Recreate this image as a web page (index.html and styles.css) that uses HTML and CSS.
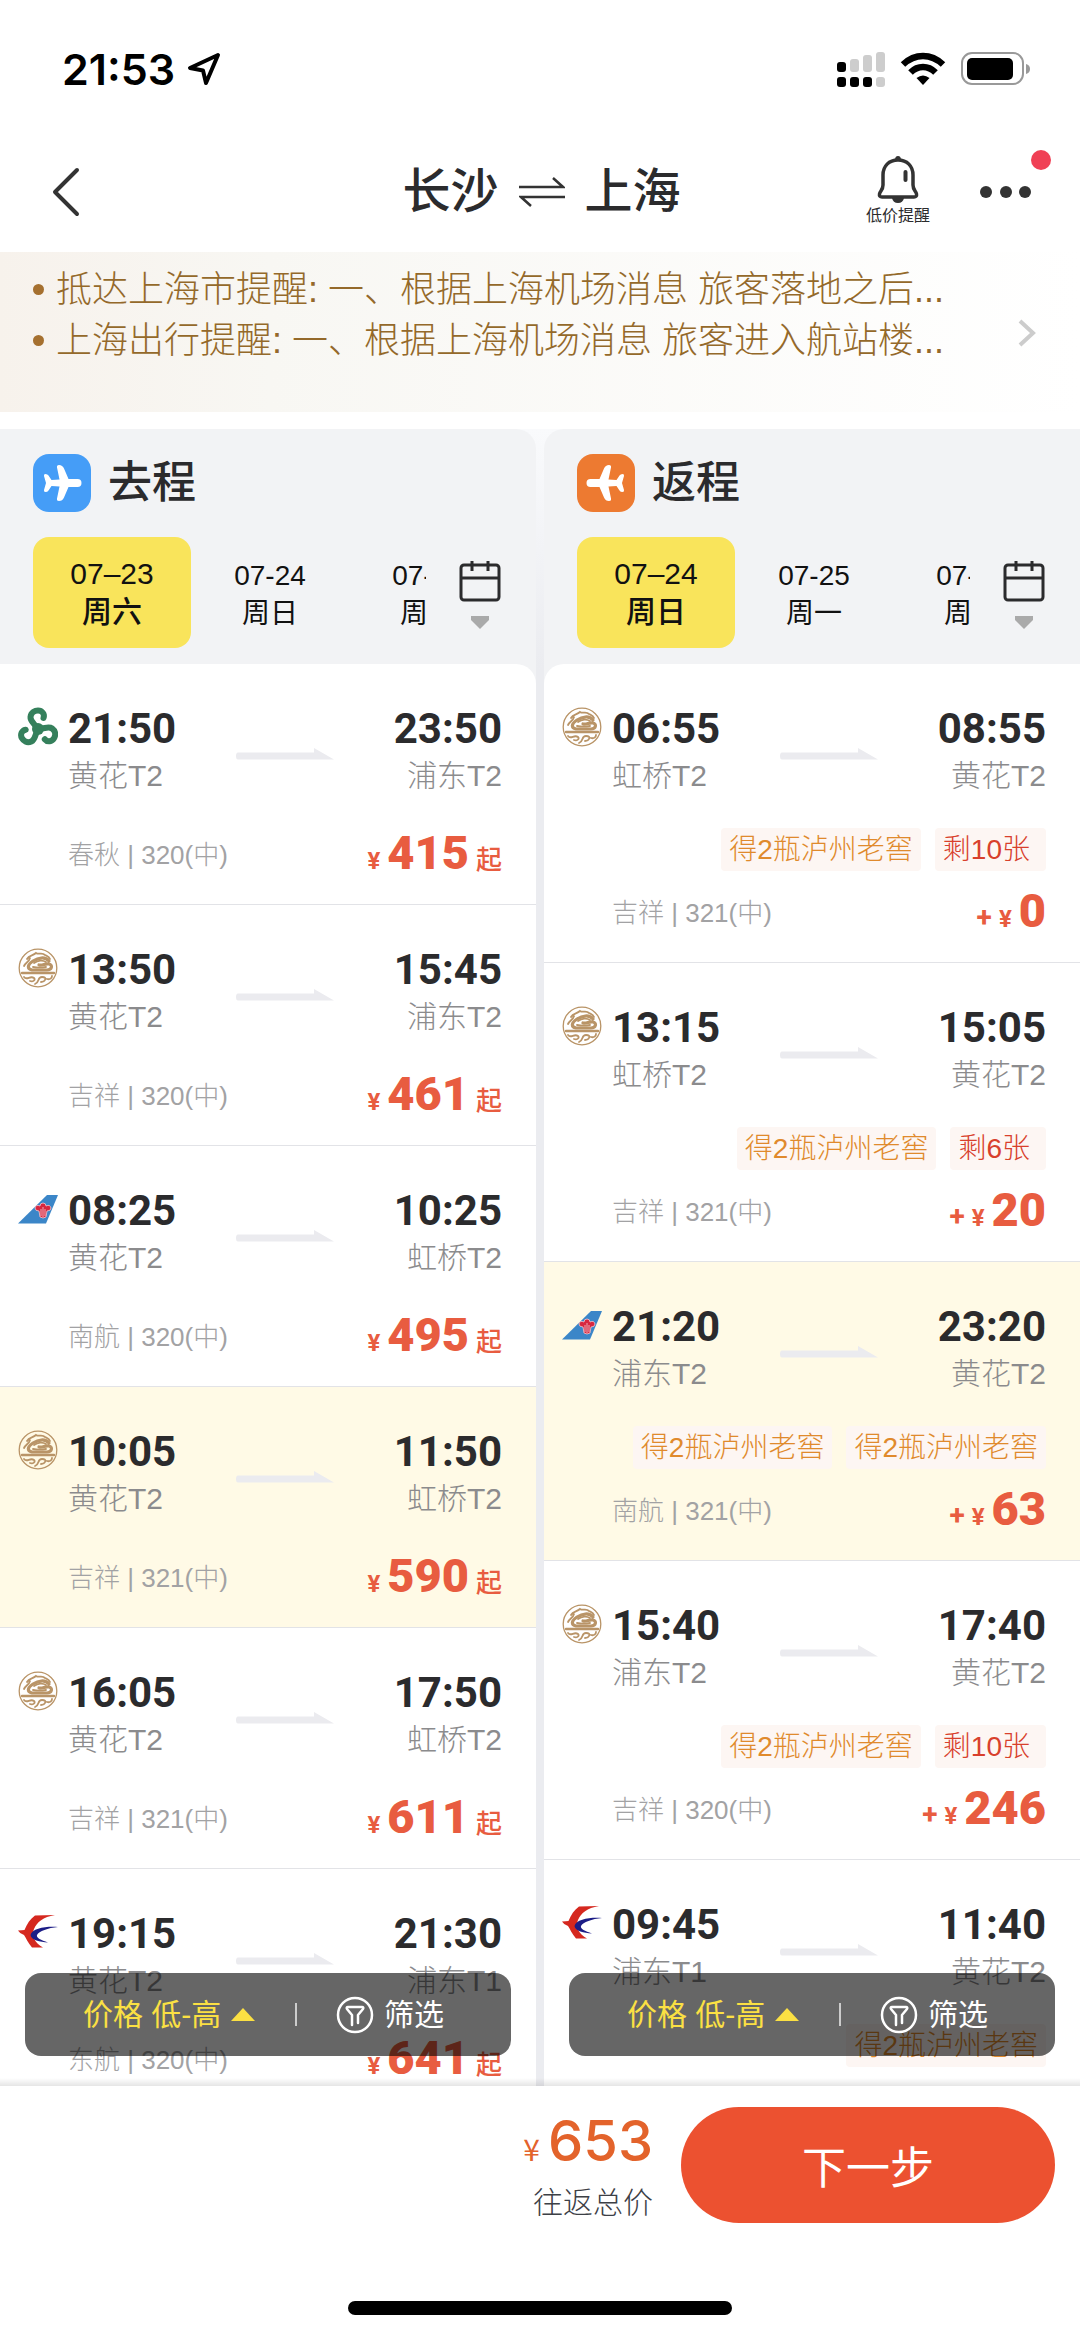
FILE: index.html
```html
<!DOCTYPE html>
<html lang="zh-CN">
<head>
    <meta charset="UTF-8">
    <meta name="viewport" content="width=device-width, initial-scale=1.0">
    <title>长沙 ⇌ 上海</title>
    <link rel="stylesheet" href="styles.css">
</head>
<body>
    <!-- shared icons -->
    <svg class="sprite" aria-hidden="true">
        <symbol id="plane" viewBox="0 0 58 58">
            <path fill="#fff" d="M44.500 25H35.500L31 14.500Q29.500 11 26 11Q23.500 11 24 13.500L26.500 25.500L18.500 26L15.500 21.500Q14.500 20 12.500 20Q10.500 20 11 22L13 29L11 36Q10.500 38 12.500 38Q14.500 38 15.500 36.500L18.500 32L26.500 32.500L24 44.500Q23.500 47 26 47Q29.500 47 31 43.500L35.500 33H44.500Q48.500 33 48.500 29Q48.500 25 44.500 25Z"/>
        </symbol>
        <symbol id="calendar" viewBox="0 0 42 72">
            <g fill="none" stroke="#2b2b2d" stroke-width="3">
                <rect x="2" y="5" width="38" height="35" rx="3"/>
                <path d="M2 18H40M13 1V11M29 1V11"/>
            </g>
            <path fill="#aaa" d="M12 56H30V60L21 69L12 60Z"/>
        </symbol>
        <symbol id="arrow" viewBox="0 0 98 12">
            <path fill="#ebebef" d="M2 4.500H78V0L98 11.500H2Q0 11.500 0 8Q0 4.500 2 4.500Z"/>
        </symbol>
        <symbol id="filter" viewBox="0 0 38 38">
            <g fill="none" stroke="#fff" stroke-width="2.500" stroke-linejoin="round" stroke-linecap="round">
                <circle cx="19" cy="19" r="17"/>
                <path d="M16 29V19L11 13Q10 11 12 11H26Q28 11 27 13L22 19V27"/>
            </g>
        </symbol>
        <symbol id="spring" viewBox="0 0 40 40">
            <g fill="none" stroke="#35805c" stroke-width="6" stroke-linecap="round">
                <path d="M20 23C18 17 12 15 12.500 10C13 5 17 3.500 20 3.500C24 3.500 27 7 25.500 11"/>
                <path d="M20 23C18 17 12 15 12.500 10C13 5 17 3.500 20 3.500C24 3.500 27 7 25.500 11" transform="rotate(120 20 22)"/>
                <path d="M20 23C18 17 12 15 12.500 10C13 5 17 3.500 20 3.500C24 3.500 27 7 25.500 11" transform="rotate(240 20 22)"/>
            </g>
            <circle cx="20" cy="22" r="6" fill="#35805c"/>
        </symbol>
        <symbol id="juneyao" viewBox="0 0 40 40">
            <g fill="none" stroke="#b99467" stroke-linecap="round">
                <circle cx="20" cy="20" r="18.800" stroke-width="1.300"/>
                <path stroke-width="3.200" d="M31 13C27 8 20 10 15 13C9 17 9 21 14 22H29C34 22 35 17 31 16C27 15 25 18 21 17"/>
                <path stroke-width="1.800" d="M9 11C11 7 15 8 18 5C21 7 24 4 27 7C29 8 31 8 32 11M6 18C8 14 11 14 12 10M16 15C20 12 25 12 28 14M15 19C20 20 23 20 28 19"/>
                <path stroke-width="2.400" d="M4 25H36"/>
                <path stroke-width="1.800" d="M6 29C9 33 12 27 16 30C18 32 15 34 12 33M17 36C22 34 19 29 24 29C30 29 27 34 23 34M29 31C32 32 34 30 34 28"/>
            </g>
        </symbol>
        <symbol id="southern" viewBox="0 0 40 40">
            <path fill="#3b86c8" d="M0 34.500L29 6H40L28 34.500Z"/>
            <g fill="#d8273f" stroke="#f3c9d2" stroke-width="0.800">
                <path d="M17 19Q18 15 22 17Q22 14 25 14Q28 14 28 17Q32 15 33 19Q33 22 29 22L28 28Q25 30 22 28L21 22Q17 22 17 19Z"/>
                <path d="M23 20V27M25 18V28M27 20V27" fill="none"/>
            </g>
        </symbol>
        <symbol id="eastern" viewBox="0 0 40 40">
            <path fill="#d5281f" d="M37 3C25 5 19 10 16 17C13 24 17 31 25 35.500H14C10 31 8 26 6 23Q2 22 0 18.500Q4 18 6.500 18C9 12 12 7 17 3.500Z"/>
            <path fill="#1c1d86" d="M40 15C29 14 14 16 12.500 23C13 28 22 30 30 30.500C23 28 18 26 19 23C21 19 30 16 40 15Z"/>
        </symbol>
    </svg>

    <div class="app">
        <div class="status-bar">
            <div class="clock">
                <span>21:53</span>
                <svg width="34" height="34" viewBox="0 0 34 34"><path d="M31 3L3 16L16 18.500L19 31Z" fill="none" stroke="#000" stroke-width="4" stroke-linejoin="round"/></svg>
            </div>
            <div class="status-icons">
                <svg width="48" height="36" viewBox="0 0 48 36">
                    <g fill="#000">
                        <rect x="0" y="11" width="9" height="10" rx="3"/>
                        <rect x="0" y="26" width="9" height="10" rx="3"/>
                        <rect x="13" y="26" width="9" height="10" rx="3"/>
                        <rect x="26" y="26" width="9" height="10" rx="3"/>
                    </g>
                    <g fill="#cdcdcd">
                        <rect x="13" y="8" width="9" height="13" rx="3"/>
                        <rect x="26" y="4" width="9" height="17" rx="3"/>
                        <rect x="39" y="1" width="9" height="20" rx="3"/>
                        <rect x="39" y="26" width="9" height="10" rx="3"/>
                    </g>
                </svg>
                <svg width="46" height="36" viewBox="0 0 46 36">
                    <g fill="none" stroke="#000" stroke-width="6.500">
                        <path d="M3 13.500Q12 5 23 5Q34 5 43 13.500"/>
                        <path d="M10.500 21.500Q16 16 23 16Q30 16 35.500 21.500"/>
                    </g>
                    <path d="M16.500 27Q23 22 29.500 27L23 34Z"/>
                </svg>
                <svg width="70" height="36" viewBox="0 0 70 36">
                    <rect x="1" y="2" width="61" height="31" rx="10" fill="none" stroke="#999" stroke-width="2"/>
                    <rect x="6" y="7" width="46" height="22" rx="5"/>
                    <path fill="#999" d="M65 13Q69 14 69 18Q69 22 65 23Z"/>
                </svg>
            </div>
        </div>

        <header class="nav">
            <button class="icon-btn back" aria-label="返回">
                <svg width="30" height="52" viewBox="0 0 30 52"><path d="M26 4L4 26L26 48" fill="none" stroke="#333" stroke-width="4" stroke-linecap="round" stroke-linejoin="round"/></svg>
            </button>
            <h1 class="nav-title">
                <span>长沙</span>
                <svg width="46" height="30" viewBox="0 0 46 30"><path d="M0 10H44L34 1M46 20H2L12 29" fill="none" stroke="#333" stroke-width="2.500"/></svg>
                <span>上海</span>
            </h1>
            <div class="nav-actions">
                <button class="icon-btn alert-btn">
                    <svg width="42" height="48" viewBox="0 0 42 48">
                        <path d="M21 4C12 4 6 10 6 19V29C6 34 3 35 2.500 38Q2 41 5 41H37Q40 41 39.500 38C39 35 36 34 36 29V19C36 10 30 4 21 4Z" fill="none" stroke="#333" stroke-width="3.500"/>
                        <path d="M18 4Q18 0 21 0Q24 0 24 4ZM15 42H27Q26 47 21 47Q16 47 15 42Z" fill="#333"/>
                        <path d="M28.500 16V24" stroke="#333" stroke-width="4" stroke-linecap="round"/>
                    </svg>
                    <span>低价提醒</span>
                </button>
                <button class="icon-btn more-btn" aria-label="更多">
                    <svg width="52" height="12" viewBox="0 0 52 12" fill="#333"><circle cx="6" cy="6" r="6"/><circle cx="26" cy="6" r="6"/><circle cx="45" cy="6" r="6"/></svg>
                    <i class="red-dot"></i>
                </button>
            </div>
        </header>

        <a class="notice" href="#">
            <ul>
                <li>抵达上海市提醒: 一、根据上海机场消息 旅客落地之后...</li>
                <li>上海出行提醒: 一、根据上海机场消息 旅客进入航站楼...</li>
            </ul>
            <svg width="20" height="30" viewBox="0 0 20 30"><path d="M3 3L16 15L3 27" fill="none" stroke="#ccc" stroke-width="4"/></svg>
        </a>

        <main class="columns">
            <section class="column depart">
                <div class="column-head">
                    <h2><svg class="plane blue"><use href="#plane"/></svg>去程</h2>
                    <div class="date-bar">
                        <div class="dates">
                            <button class="date active"><span>07–23</span><span>周六</span></button>
                            <button class="date"><span>07-24</span><span>周日</span></button>
                            <button class="date"><span>07-25</span><span>周一</span></button>
                        </div>
                        <button class="icon-btn calendar" aria-label="选择日期"><svg width="42" height="72"><use href="#calendar"/></svg></button>
                    </div>
                </div>
                <ul class="flights">
                    <li class="flight">
                        <svg class="logo"><use href="#spring"/></svg>
                        <div class="info">
                            <div class="route">
                                <div class="stop"><b>21:50</b><span>黄花T2</span></div>
                                <svg class="arrow"><use href="#arrow"/></svg>
                                <div class="stop end"><b>23:50</b><span>浦东T2</span></div>
                            </div>
                            <div class="fare"><span class="plane-type">春秋 | 320(中)</span><span class="price"><small>¥</small><b>415</b><em>起</em></span></div>
                        </div>
                    </li>
                    <li class="flight">
                        <svg class="logo"><use href="#juneyao"/></svg>
                        <div class="info">
                            <div class="route">
                                <div class="stop"><b>13:50</b><span>黄花T2</span></div>
                                <svg class="arrow"><use href="#arrow"/></svg>
                                <div class="stop end"><b>15:45</b><span>浦东T2</span></div>
                            </div>
                            <div class="fare"><span class="plane-type">吉祥 | 320(中)</span><span class="price"><small>¥</small><b>461</b><em>起</em></span></div>
                        </div>
                    </li>
                    <li class="flight">
                        <svg class="logo"><use href="#southern"/></svg>
                        <div class="info">
                            <div class="route">
                                <div class="stop"><b>08:25</b><span>黄花T2</span></div>
                                <svg class="arrow"><use href="#arrow"/></svg>
                                <div class="stop end"><b>10:25</b><span>虹桥T2</span></div>
                            </div>
                            <div class="fare"><span class="plane-type">南航 | 320(中)</span><span class="price"><small>¥</small><b>495</b><em>起</em></span></div>
                        </div>
                    </li>
                    <li class="flight selected">
                        <svg class="logo"><use href="#juneyao"/></svg>
                        <div class="info">
                            <div class="route">
                                <div class="stop"><b>10:05</b><span>黄花T2</span></div>
                                <svg class="arrow"><use href="#arrow"/></svg>
                                <div class="stop end"><b>11:50</b><span>虹桥T2</span></div>
                            </div>
                            <div class="fare"><span class="plane-type">吉祥 | 321(中)</span><span class="price"><small>¥</small><b>590</b><em>起</em></span></div>
                        </div>
                    </li>
                    <li class="flight">
                        <svg class="logo"><use href="#juneyao"/></svg>
                        <div class="info">
                            <div class="route">
                                <div class="stop"><b>16:05</b><span>黄花T2</span></div>
                                <svg class="arrow"><use href="#arrow"/></svg>
                                <div class="stop end"><b>17:50</b><span>虹桥T2</span></div>
                            </div>
                            <div class="fare"><span class="plane-type">吉祥 | 321(中)</span><span class="price"><small>¥</small><b>611</b><em>起</em></span></div>
                        </div>
                    </li>
                    <li class="flight">
                        <svg class="logo"><use href="#eastern"/></svg>
                        <div class="info">
                            <div class="route">
                                <div class="stop"><b>19:15</b><span>黄花T2</span></div>
                                <svg class="arrow"><use href="#arrow"/></svg>
                                <div class="stop end"><b>21:30</b><span>浦东T1</span></div>
                            </div>
                            <div class="fare"><span class="plane-type">东航 | 320(中)</span><span class="price"><small>¥</small><b>641</b><em>起</em></span></div>
                        </div>
                    </li>
                </ul>
                <div class="toolbar">
                    <button class="sort">价格 低-高<i class="up"></i></button>
                    <i class="divider"></i>
                    <button class="filter"><svg width="38" height="38"><use href="#filter"/></svg>筛选</button>
                </div>
            </section>

            <section class="column return">
                <div class="column-head">
                    <h2><svg class="plane orange"><use href="#plane" transform="matrix(-1 0 0 1 58 0)"/></svg>返程</h2>
                    <div class="date-bar">
                        <div class="dates">
                            <button class="date active"><span>07–24</span><span>周日</span></button>
                            <button class="date"><span>07-25</span><span>周一</span></button>
                            <button class="date"><span>07-26</span><span>周二</span></button>
                        </div>
                        <button class="icon-btn calendar" aria-label="选择日期"><svg width="42" height="72"><use href="#calendar"/></svg></button>
                    </div>
                </div>
                <ul class="flights">
                    <li class="flight">
                        <svg class="logo"><use href="#juneyao"/></svg>
                        <div class="info">
                            <div class="route">
                                <div class="stop"><b>06:55</b><span>虹桥T2</span></div>
                                <svg class="arrow"><use href="#arrow"/></svg>
                                <div class="stop end"><b>08:55</b><span>黄花T2</span></div>
                            </div>
                            <div class="tags"><span class="tag">得2瓶泸州老窖</span><span class="tag left">剩10张</span></div>
                            <div class="fare"><span class="plane-type">吉祥 | 321(中)</span><span class="price"><i>+</i><small>¥</small><b>0</b></span></div>
                        </div>
                    </li>
                    <li class="flight">
                        <svg class="logo"><use href="#juneyao"/></svg>
                        <div class="info">
                            <div class="route">
                                <div class="stop"><b>13:15</b><span>虹桥T2</span></div>
                                <svg class="arrow"><use href="#arrow"/></svg>
                                <div class="stop end"><b>15:05</b><span>黄花T2</span></div>
                            </div>
                            <div class="tags"><span class="tag">得2瓶泸州老窖</span><span class="tag left">剩6张</span></div>
                            <div class="fare"><span class="plane-type">吉祥 | 321(中)</span><span class="price"><i>+</i><small>¥</small><b>20</b></span></div>
                        </div>
                    </li>
                    <li class="flight selected">
                        <svg class="logo"><use href="#southern"/></svg>
                        <div class="info">
                            <div class="route">
                                <div class="stop"><b>21:20</b><span>浦东T2</span></div>
                                <svg class="arrow"><use href="#arrow"/></svg>
                                <div class="stop end"><b>23:20</b><span>黄花T2</span></div>
                            </div>
                            <div class="tags"><span class="tag">得2瓶泸州老窖</span><span class="tag">得2瓶泸州老窖</span></div>
                            <div class="fare"><span class="plane-type">南航 | 321(中)</span><span class="price"><i>+</i><small>¥</small><b>63</b></span></div>
                        </div>
                    </li>
                    <li class="flight">
                        <svg class="logo"><use href="#juneyao"/></svg>
                        <div class="info">
                            <div class="route">
                                <div class="stop"><b>15:40</b><span>浦东T2</span></div>
                                <svg class="arrow"><use href="#arrow"/></svg>
                                <div class="stop end"><b>17:40</b><span>黄花T2</span></div>
                            </div>
                            <div class="tags"><span class="tag">得2瓶泸州老窖</span><span class="tag left">剩10张</span></div>
                            <div class="fare"><span class="plane-type">吉祥 | 320(中)</span><span class="price"><i>+</i><small>¥</small><b>246</b></span></div>
                        </div>
                    </li>
                    <li class="flight">
                        <svg class="logo"><use href="#eastern"/></svg>
                        <div class="info">
                            <div class="route">
                                <div class="stop"><b>09:45</b><span>浦东T1</span></div>
                                <svg class="arrow"><use href="#arrow"/></svg>
                                <div class="stop end"><b>11:40</b><span>黄花T2</span></div>
                            </div>
                            <div class="tags"><span class="tag">得2瓶泸州老窖</span></div>
                        </div>
                    </li>
                </ul>
                <div class="toolbar">
                    <button class="sort">价格 低-高<i class="up"></i></button>
                    <i class="divider"></i>
                    <button class="filter"><svg width="38" height="38"><use href="#filter"/></svg>筛选</button>
                </div>
            </section>
        </main>

        <footer class="bottom">
            <div class="checkout">
                <div class="total">
                    <div class="total-price"><small>¥</small><b>653</b></div>
                    <span>往返总价</span>
                </div>
                <button class="next">下一步</button>
            </div>
            <div class="home-indicator"></div>
        </footer>
    </div>
</body>
</html>
```
FILE: styles.css
```css
* {
    box-sizing: border-box;
}
body {
    margin: 0;
    font-family: "Liberation Sans", "Noto Sans CJK SC", sans-serif;
    color: #2b2b2d;
    background-color: #fff;
}
ul, h1, h2 {
    margin: 0;
    padding: 0;
    list-style: none;
}
button {
    padding: 0;
    border: none;
    background: none;
    font-family: inherit;
    color: inherit;
    cursor: pointer;
}
i, em {
    font-style: normal;
}
svg {
    display: block;
    flex: none;
}
.sprite {
    position: absolute;
    width: 0;
    height: 0;
}
.app {
    display: flex;
    flex-direction: column;
    height: 100vh;
}

/* status bar */
.status-bar {
    display: flex;
    justify-content: space-between;
    align-items: center;
    height: 128px;
    padding: 10px 49px 0 62px;
}
.clock {
    display: flex;
    align-items: center;
    gap: 12px;
    font: 600 43px Inter, sans-serif;
    color: #000;
}
.status-icons {
    display: flex;
    gap: 15px;
}

/* nav */
.nav {
    display: grid;
    grid-template-columns: 1fr auto 1fr;
    align-items: center;
    height: 124px;
    padding: 3px 48px 0 51px;
}
.back {
    justify-self: start;
}
.nav-title {
    display: flex;
    align-items: center;
    gap: 20px;
    font-size: 48px;
    font-weight: 500;
    line-height: 64px;
}
.nav-actions {
    display: flex;
    justify-content: flex-end;
    align-items: center;
    gap: 50px;
}
.alert-btn {
    display: flex;
    flex-direction: column;
    align-items: center;
    font-size: 16px;
    line-height: 24px;
}
.more-btn {
    position: relative;
}
.red-dot {
    position: absolute;
    right: -19px;
    top: -36px;
    width: 20px;
    height: 20px;
    border-radius: 50%;
    background-color: #f04055;
}

/* notice */
.notice {
    display: flex;
    justify-content: space-between;
    align-items: flex-end;
    padding: 12px 43px 46px 33px;
    margin-bottom: 17px;
    background: linear-gradient(to right, #f7f2ec, #f8f7f3 25%, #fff);
    color: #94692a;
    font-size: 36px;
    font-weight: 300;
    line-height: 51px;
    text-decoration: none;
}
.notice svg {
    margin-bottom: 18px;
}
.notice li {
    display: flex;
    align-items: center;
    gap: 12px;
    white-space: pre;
}
.notice li::before {
    content: "";
    width: 11px;
    height: 11px;
    border-radius: 50%;
    background-color: #a5702f;
}

/* two columns */
.columns {
    flex: 1;
    display: grid;
    grid-template-columns: 1fr 1fr;
    gap: 8px;
    min-height: 0;
    position: relative;
    overflow: hidden;
    background: linear-gradient(#f9fafc, #ebecf0 240px);
}
.columns::after {
    content: "";
    position: absolute;
    left: 0;
    right: 0;
    bottom: 0;
    height: 8px;
    background: linear-gradient(rgba(0, 0, 0, 0), rgba(0, 0, 0, 0.1));
}
.column {
    position: relative;
    min-width: 0;
    overflow: hidden;
    background-color: #f2f3f5;
}
.depart, .depart .flights {
    border-top-right-radius: 20px;
}
.return, .return .flights {
    border-top-left-radius: 20px;
}
.column-head {
    padding: 25px 35px 16px 33px;
}
.column-head h2 {
    display: flex;
    align-items: center;
    gap: 17px;
    margin-bottom: 25px;
    font-size: 44px;
    font-weight: 500;
    line-height: 58px;
}
.plane {
    width: 58px;
    height: 58px;
    border-radius: 16px;
}
.blue {
    background-color: #459df7;
}
.orange {
    background-color: #ed7a31;
}
.date-bar {
    display: flex;
    justify-content: space-between;
    align-items: center;
}
.dates {
    display: flex;
    flex: 1;
    overflow: hidden;
    margin-right: 33px;
}
.calendar {
    padding-top: 6px;
}
.date {
    display: flex;
    flex: none;
    flex-direction: column;
    align-items: center;
    justify-content: center;
    gap: 2px;
    width: 158px;
    height: 111px;
    padding-top: 4px;
    border-radius: 16px;
    font-size: 28px;
    line-height: 36px;
    color: #111;
}
.date.active {
    padding-top: 0;
    background-color: #f9e45b;
    font-size: 30px;
    font-weight: 500;
}

/* flights */
.flights {
    overflow: hidden;
    background-color: #fff;
}
.flight {
    display: flex;
    gap: 10px;
    padding: 43px 34px 20px 18px;
    border-bottom: 1px solid #e2e3e7;
}
.flight.selected {
    background-color: #fffae6;
}
.logo {
    width: 40px;
    height: 40px;
}
.info {
    flex: 1;
}
.route {
    display: flex;
    justify-content: space-between;
    margin-bottom: 33px;
}
.stop {
    display: flex;
    flex-direction: column;
    gap: 6px;
    font-size: 30px;
    font-weight: 300;
    line-height: 38px;
    color: #8b8b8d;
}
.stop b {
    font: 700 42px/44px Roboto, sans-serif;
    color: #2b2b2d;
}
.stop.end {
    align-items: flex-end;
}
.arrow {
    width: 98px;
    height: 12px;
    margin-top: 41px;
}
.tags {
    display: flex;
    justify-content: flex-end;
    gap: 14px;
    margin-bottom: 15px;
}
.tag {
    padding: 0 8px;
    border-radius: 4px;
    background-color: #fdf6f3;
    font-size: 28px;
    font-weight: 300;
    line-height: 43px;
    color: #e08a2c;
}
.tag.left {
    padding-right: 16px;
    color: #d8402c;
}
.fare {
    display: flex;
    justify-content: space-between;
    align-items: flex-start;
    height: 56px;
}
.plane-type {
    font-size: 26px;
    font-weight: 300;
    line-height: 54px;
    color: #a2a2a4;
}
.price {
    display: flex;
    align-items: baseline;
    gap: 7px;
    color: #e85c40;
    font-family: Roboto, "Noto Sans CJK SC", sans-serif;
    font-weight: 700;
    line-height: 50px;
}
.price b {
    font-size: 47px;
}
.price small {
    font-size: 24px;
}
.price i {
    font-size: 28px;
}
.price em {
    font-size: 26px;
    font-weight: 500;
}

/* sort and filter */
.toolbar {
    position: absolute;
    left: 25px;
    right: 25px;
    bottom: 30px;
    display: flex;
    align-items: center;
    height: 83px;
    padding: 0 67px 0 58px;
    justify-content: space-between;
    border-radius: 16px;
    background-color: rgba(0, 0, 0, 0.6);
    color: #fff;
}
.toolbar button {
    display: flex;
    align-items: center;
    gap: 10px;
    font-size: 30px;
    line-height: 40px;
}
.toolbar .sort {
    color: #fbe043;
}
.up {
    border: 12px solid transparent;
    border-top: none;
    border-bottom: 13px solid #fbe043;
}
.divider {
    width: 2px;
    height: 23px;
    background-color: #ccc;
}

/* bottom */
.bottom {
    padding: 20px 25px 22px;
    background-color: #fff;
}
.checkout {
    display: flex;
    justify-content: flex-end;
    align-items: center;
    gap: 28px;
}
.total {
    display: flex;
    flex-direction: column;
    align-items: flex-end;
    font-size: 30px;
    font-weight: 300;
    line-height: 40px;
    color: #3c4046;
}
.total-price {
    display: flex;
    align-items: baseline;
    gap: 8px;
    color: #e3632b;
    line-height: 70px;
}
.total-price b {
    font: 500 56px/70px Inter, sans-serif;
}
.total-price small {
    font-family: "Noto Sans CJK SC", sans-serif;
    font-size: 30px;
    font-weight: 400;
}
.next {
    width: 374px;
    height: 116px;
    border-radius: 58px;
    background-color: #ec5130;
    color: #fff;
    font-size: 44px;
}
.home-indicator {
    width: 384px;
    height: 14px;
    margin: 78px auto 0;
    border-radius: 7px;
    background-color: #000;
}
```
